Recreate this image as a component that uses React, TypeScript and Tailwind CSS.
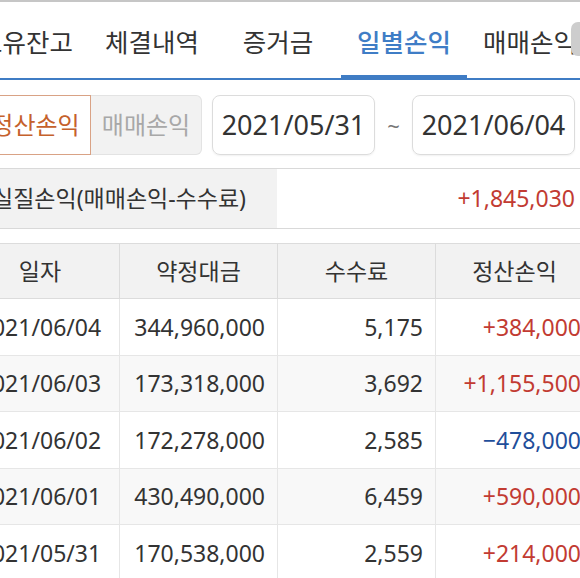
import React from "react";

const tabs = ["보유잔고", "체결내역", "증거금", "일별손익", "매매손익"];

const rows = [
  { date: "2021/06/04", amount: "344,960,000", fee: "5,175", pl: "+384,000", h: "h-[57px]" },
  { date: "2021/06/03", amount: "173,318,000", fee: "3,692", pl: "+1,155,500", h: "h-[56px]" },
  { date: "2021/06/02", amount: "172,278,000", fee: "2,585", pl: "−478,000", h: "h-[57px]" },
  { date: "2021/06/01", amount: "430,490,000", fee: "6,459", pl: "+590,000", h: "h-[56px]" },
  { date: "2021/05/31", amount: "170,538,000", fee: "2,559", pl: "+214,000", h: "h-[57px]" },
];

export default function App() {
  return (
    <div className="w-[580px] h-[578px] overflow-hidden bg-white text-[#333] font-['Noto_Sans','Noto_Sans_CJK_KR',sans-serif]">
      {/* 상단 탭 */}
      <div className="relative h-[80px] border-t-2 border-[#c6c6c6] border-b-2 border-b-[#3f7cc4]">
        <div className="flex h-full ml-[-37px]">
          {tabs.map((t) => {
            const active = t === "일별손익";
            return (
              <div
                key={t}
                className={`relative shrink-0 w-[126px] flex items-center justify-center text-[25.5px] pt-[4px] whitespace-nowrap ${
                  active ? "text-[#3f7dc6] font-medium" : "text-[#333]"
                }`}
              >
                {t}
                {active && (
                  <div className="absolute left-0 right-0 bottom-[-2px] h-[5px] bg-[#3f7cc4]" />
                )}
              </div>
            );
          })}
        </div>
        <div className="absolute right-0 top-[20px] w-[9px] h-[34px] rounded-l-[7px] bg-[#cdcdcd]" />
      </div>

      {/* 조회 조건 */}
      <div className="flex items-stretch h-[60px] mt-[15px] ml-[-20px]">
        <div className="shrink-0 w-[111px] flex items-center justify-center border border-[#d9a285] bg-white text-[24px] text-[#c5612c]">
          정산손익
        </div>
        <div className="shrink-0 w-[111px] flex items-center justify-center border border-l-0 border-[#e3e3e3] rounded-r-[6px] bg-[#f2f2f2] text-[24px] text-[#a8a8a8]">
          매매손익
        </div>
        <div className="shrink-0 w-[163px] ml-[10px] flex items-center justify-center border border-[#dcdcdc] rounded-[8px] text-[27px] text-[#333] shadow-[0_1px_2px_rgba(0,0,0,0.06)]">
          2021/05/31
        </div>
        <div className="shrink-0 w-[37px] flex items-center justify-center text-[22px] text-[#777]">
          ~
        </div>
        <div className="shrink-0 w-[163px] flex items-center justify-center border border-[#dcdcdc] rounded-[8px] text-[27px] text-[#333] shadow-[0_1px_2px_rgba(0,0,0,0.06)]">
          2021/06/04
        </div>
      </div>

      {/* 실질손익 */}
      <div className="mt-[13px] h-[61px] border-y border-[#d9d9d9] flex ml-[-39px]">
        <div className="shrink-0 w-[316px] bg-[#f2f2f2] flex items-center justify-center text-[23px] text-[#333] whitespace-nowrap">
          실질손익(매매손익-수수료)
        </div>
        <div className="shrink-0 w-[316px] flex items-center justify-end pr-[18px] text-[23px] text-[#c23b32]">
          +1,845,030
        </div>
      </div>

      {/* 테이블 */}
      <div className="mt-[14px] ml-[-39px] w-[632px]">
        <div className="grid grid-cols-[158px_158px_158px_158px] h-[56px] bg-[#f2f2f2] border-y border-[#dcdcdc] text-[23px] text-[#333]">
          {["일자", "약정대금", "수수료", "정산손익"].map((h, i) => (
            <div
              key={h}
              className={`flex items-center justify-center ${i > 0 ? "border-l border-[#dcdcdc]" : ""}`}
            >
              {h}
            </div>
          ))}
        </div>
        {rows.map((r, idx) => (
          <div
            key={r.date}
            className={`grid grid-cols-[158px_158px_158px_158px] ${r.h} border-b border-[#e6e6e6] text-[23px] ${
              idx % 2 === 1 ? "bg-[#f8f8f8]" : "bg-white"
            }`}
          >
            <div className="flex items-center justify-center">{r.date}</div>
            <div className="flex items-center justify-end pr-[12px] border-l border-[#e6e6e6]">{r.amount}</div>
            <div className="flex items-center justify-end pr-[12px] border-l border-[#e6e6e6]">{r.fee}</div>
            <div
              className={`flex items-center justify-end pr-[12px] border-l border-[#e6e6e6] ${
                r.pl.startsWith("+") ? "text-[#c23b32]" : "text-[#1f4e9a]"
              }`}
            >
              {r.pl}
            </div>
          </div>
        ))}
      </div>
    </div>
  );
}
